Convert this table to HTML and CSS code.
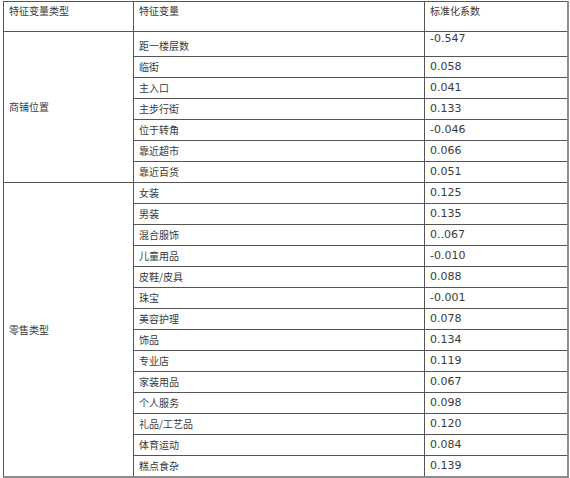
FILE: index.html
```html
<!DOCTYPE html>
<html>
<head>
<meta charset="utf-8">
<link rel="stylesheet" href="styles.css">
</head>
<body>
<table class="tbl">
  <colgroup>
    <col class="c1"><col class="c2"><col class="c3">
  </colgroup>
  <tr class="head"><td>特征变量类型</td><td>特征变量</td><td>标准化系数</td></tr>
  <tr class="first"><td rowspan="7" class="grp">商铺位置</td><td>距一楼层数</td><td class="num">-0.547</td></tr>
  <tr><td>临街</td><td class="num">0.058</td></tr>
  <tr><td>主入口</td><td class="num">0.041</td></tr>
  <tr><td>主步行街</td><td class="num">0.133</td></tr>
  <tr><td>位于转角</td><td class="num">-0.046</td></tr>
  <tr><td>靠近超市</td><td class="num">0.066</td></tr>
  <tr><td>靠近百货</td><td class="num">0.051</td></tr>
  <tr><td rowspan="14" class="grp">零售类型</td><td>女装</td><td class="num">0.125</td></tr>
  <tr><td>男装</td><td class="num">0.135</td></tr>
  <tr><td>混合服饰</td><td class="num">0..067</td></tr>
  <tr><td>儿童用品</td><td class="num">-0.010</td></tr>
  <tr><td>皮鞋/皮具</td><td class="num">0.088</td></tr>
  <tr><td>珠宝</td><td class="num">-0.001</td></tr>
  <tr><td>美容护理</td><td class="num">0.078</td></tr>
  <tr><td>饰品</td><td class="num">0.134</td></tr>
  <tr><td>专业店</td><td class="num">0.119</td></tr>
  <tr><td>家装用品</td><td class="num">0.067</td></tr>
  <tr><td>个人服务</td><td class="num">0.098</td></tr>
  <tr><td>礼品/工艺品</td><td class="num">0.120</td></tr>
  <tr><td>体育运动</td><td class="num">0.084</td></tr>
  <tr><td>糕点食杂</td><td class="num">0.139</td></tr>
</table>
</body>
</html>
```
FILE: styles.css
```css
html, body {
  margin: 0;
  padding: 0;
  background: #ffffff;
}
body {
  padding: 1px 0 0 3px;
  font-family: "Noto Sans CJK SC", sans-serif;
  font-size: 10px;
  color: #3a3a3a;
}
.tbl {
  border-collapse: collapse;
  table-layout: fixed;
  width: 564px;
  border-top: 1px solid #9a9a9a;
  border-left: 1px solid #333333;
  border-right: 2px solid #8c8c8c;
  border-bottom: 2px solid #8c8c8c;
}
.c1 { width: 130px; }
.c2 { width: 291px; }
.c3 { width: 143px; }
.tbl td {
  border: 1px solid #555555;
  padding: 0 0 0 5px;
  height: 20px;
  line-height: 14px;
  vertical-align: middle;
  white-space: nowrap;
}
.tbl tr.head td {
  height: 27px;
  vertical-align: top;
  padding-top: 2px;
  padding-bottom: 0;
}
.tbl tr.first td {
  height: 21px;
  padding-top: 3px;
}
.tbl tr.first td.num {
  vertical-align: top;
  padding-top: 0;
  height: 24px;
}
.tbl tr.first td.grp {
  padding-top: 0;
}
.tbl td.num {
  font-family: "DejaVu Sans", Verdana, sans-serif;
  font-size: 11px;
}
.tbl td.grp {
  vertical-align: middle;
}
```
